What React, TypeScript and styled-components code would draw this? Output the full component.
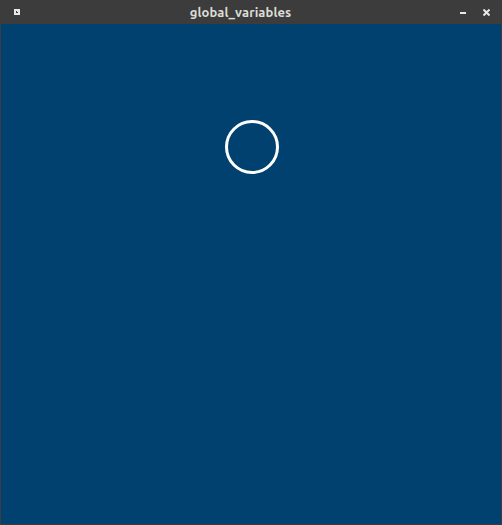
import React from 'react';
import styled, { createGlobalStyle } from 'styled-components';

const GlobalStyle = createGlobalStyle`
   html, body {
      margin: 0;
      padding: 0;
      width: 502px;
      height: 525px;
      overflow: hidden;
      background: #3c3c3c;
   }
`;

const Window = styled.div`
   display: flex;
   flex-direction: column;
   width: 502px;
   height: 525px;
   background: #3c3c3c;
`;

const TitleBar = styled.div`
   display: flex;
   align-items: center;
   height: 24px;
   padding: 0 12px 0 14px;
   font-family: 'Ubuntu', 'DejaVu Sans', sans-serif;
`;

const MenuIcon = styled.div`
   position: relative;
   width: 6px;
   height: 6px;
   background: #e8e8e8;
   margin-top: -1px;
`;

const MenuDot = styled.div`
   position: absolute;
   left: 2px;
   top: 2px;
   width: 2px;
   height: 2px;
   border-left: 1px solid #3c3c3c;
   border-bottom: 1px solid #3c3c3c;
   box-sizing: border-box;
`;

const Title = styled.div`
   flex: 1;
   text-align: center;
   color: #dcdcd6;
   font-size: 13px;
   font-weight: bold;
   padding-left: 1px;
   letter-spacing: 0.1px;
`;

const Controls = styled.div`
   display: flex;
   align-items: center;
   gap: 16px;
`;

const CanvasFrame = styled.div`
   flex: 1;
   padding: 0 1px 1px 1px;
   display: flex;
`;

const Canvas = styled.div`
   position: relative;
   flex: 1;
   background: #00416f;
`;

const Ring = styled.div`
   position: absolute;
   left: 224px;
   top: 96px;
   width: 48px;
   height: 48px;
   border: 3px solid #ffffff;
   border-radius: 50%;
`;

const App: React.FC = () => {
   return (
      <>
         <GlobalStyle />
         <Window>
            <TitleBar>
               <MenuIcon>
                  <MenuDot />
               </MenuIcon>
               <Title>global_variables</Title>
               <Controls>
                  <svg width="7" height="7" viewBox="0 0 7 7">
                     <rect x="0" y="3" width="6" height="2" fill="#e8e8e8" />
                  </svg>
                  <svg width="7" height="7" viewBox="0 0 7 7">
                     <path d="M0.5 0.5 L6.5 6.5 M6.5 0.5 L0.5 6.5" stroke="#e8e8e8" strokeWidth="2" />
                  </svg>
               </Controls>
            </TitleBar>
            <CanvasFrame>
               <Canvas>
                  <Ring />
               </Canvas>
            </CanvasFrame>
         </Window>
      </>
   );
};

export default App;
